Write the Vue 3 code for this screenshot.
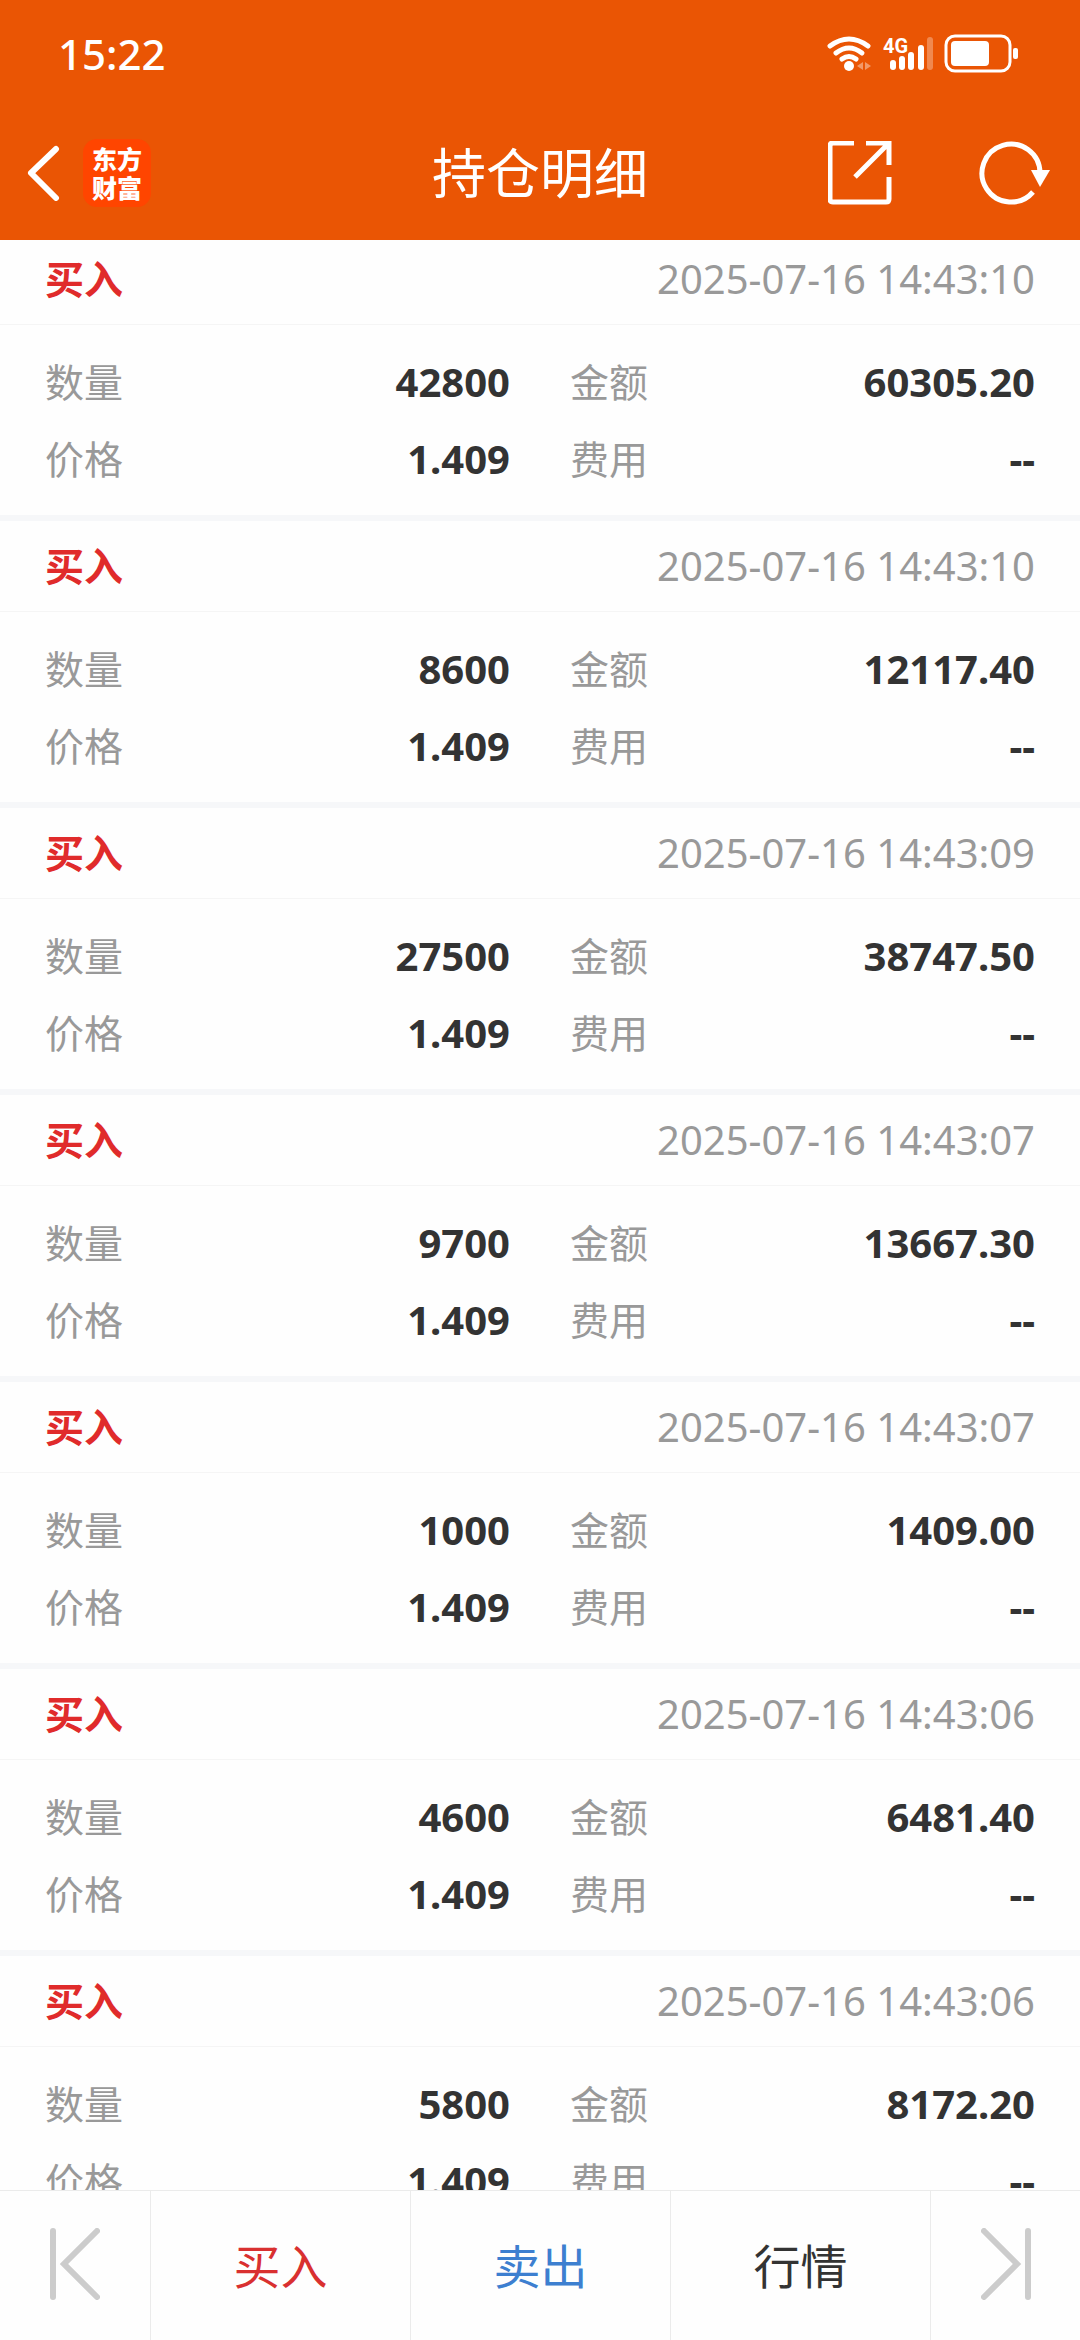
<template>
  <div class="page">
    <header class="header">
      <div class="status-bar">
        <span class="clock">15:22</span>
        <svg class="status-icons" width="196" height="44" viewBox="826 32 196 44" fill="none">
          <g stroke="#fff" stroke-width="5" stroke-linecap="round">
            <path d="M830 46 Q849 32 868 46" />
            <path d="M836 53 Q849 43 862 53" />
            <path d="M842 59 Q849 54 856 59" />
          </g>
          <circle cx="849" cy="66" r="5" fill="#fff" />
          <path d="M863 62 V70 L857 66 Z M865 62 V70 L871 66 Z" fill="#fff" fill-opacity="0.4" />
          <text class="network" x="883" y="53">4G</text>
          <g stroke="#fff" stroke-width="6" stroke-linecap="round">
            <path d="M893 63 V67" />
            <path d="M902 59 V67" />
            <path d="M911 55 V67" />
            <path d="M921 48 V67" />
            <path d="M930 40 V67" stroke-opacity="0.3" />
          </g>
          <rect x="946" y="36" width="64" height="35" rx="9" stroke="#fff" stroke-width="3" />
          <rect x="951" y="41" width="38" height="25" rx="4" fill="#fff" />
          <rect x="1013" y="48" width="5" height="11" rx="2" fill="#fff" />
        </svg>
      </div>

      <div class="nav-bar">
        <div class="nav-left">
          <button class="icon-button" type="button" aria-label="返回">
            <svg width="33" height="56" viewBox="27 144 33 56" fill="none">
              <path
                d="M56 148 L31 172 L56 197"
                stroke="#fff"
                stroke-width="6"
                stroke-linecap="round"
                stroke-linejoin="round"
              />
            </svg>
          </button>
          <div class="logo">东方<br />财富</div>
        </div>
        <h1 class="title">持仓明细</h1>
        <div class="nav-right">
          <button class="icon-button" type="button" aria-label="分享">
            <svg width="64" height="64" viewBox="828 141 64 64" fill="none" stroke="#fff">
              <path
                d="M854 143 H833 Q830 143 830 146 V199 Q830 202 833 202 H886 Q889 202 889 199 V177"
                stroke-width="5"
              />
              <path d="M866 143 H889 V165 M889 143 L855 177" stroke-width="5" />
            </svg>
          </button>
          <button class="icon-button" type="button" aria-label="刷新">
            <svg width="74" height="68" viewBox="979 138 74 68" fill="none">
              <path d="M1040 172 A29 29 0 1 0 1033 191" stroke="#fff" stroke-width="5" />
              <path d="M1031 169 H1050 L1040 186 Z" fill="#fff" />
            </svg>
          </button>
        </div>
      </div>
    </header>

    <main ref="list" class="list">
      <section class="record" v-for="(item, index) in records" :key="index">
        <div class="record-head">
          <h2 class="side">买入</h2>
          <time class="time">{{ item.time }}</time>
        </div>
        <dl class="record-body">
          <div class="field">
            <dt>数量</dt>
            <dd>{{ item.count }}</dd>
          </div>
          <div class="field">
            <dt>金额</dt>
            <dd>{{ item.amount }}</dd>
          </div>
          <div class="field">
            <dt>价格</dt>
            <dd>1.409</dd>
          </div>
          <div class="field">
            <dt>费用</dt>
            <dd>--</dd>
          </div>
        </dl>
      </section>
    </main>

    <nav class="tab-bar">
      <button class="tab" type="button" aria-label="上一个">
        <svg width="50" height="72" viewBox="0 0 50 72" fill="none" stroke="#ccc">
          <path d="M3 3 V69" stroke-width="6" stroke-linecap="round" />
          <path d="M47 3 L14 36 L47 69" stroke-width="6" stroke-linecap="round" />
        </svg>
      </button>
      <button class="tab buy" type="button">买入</button>
      <button class="tab sell" type="button">卖出</button>
      <button class="tab" type="button">行情</button>
      <button class="tab" type="button" aria-label="下一个">
        <svg width="50" height="72" viewBox="0 0 50 72" fill="none" stroke="#ccc">
          <path d="M47 3 V69" stroke-width="6" stroke-linecap="round" />
          <path d="M3 3 L36 36 L3 69" stroke-width="6" stroke-linecap="round" />
        </svg>
      </button>
    </nav>
  </div>
</template>

<script setup>
import { onMounted, ref } from 'vue';

const list = ref(null);

const records = [
  { time: '2025-07-16 14:43:10', count: '42800', amount: '60305.20' },
  { time: '2025-07-16 14:43:10', count: '8600', amount: '12117.40' },
  { time: '2025-07-16 14:43:09', count: '27500', amount: '38747.50' },
  { time: '2025-07-16 14:43:07', count: '9700', amount: '13667.30' },
  { time: '2025-07-16 14:43:07', count: '1000', amount: '1409.00' },
  { time: '2025-07-16 14:43:06', count: '4600', amount: '6481.40' },
  { time: '2025-07-16 14:43:06', count: '5800', amount: '8172.20' },
];

// start with the top edge of the first record under the header
onMounted(() => {
  list.value.scrollTop = 6;
});
</script>

<style>
body {
  margin: 0;
  background: #fefefe;
}
</style>

<style scoped>
.page {
  display: flex;
  flex-direction: column;
  height: 100vh;
  overflow: hidden;
  color: #333;
  font-family: 'Noto Sans', 'Noto Sans CJK SC', sans-serif;
}

button {
  padding: 0;
  border: none;
  background: none;
  color: inherit;
  font-family: inherit;
  cursor: pointer;
}

svg {
  display: block;
}

.header {
  flex-shrink: 0;
  background: #ea5504;
  color: #fff;
}

.status-bar {
  display: flex;
  align-items: center;
  justify-content: space-between;
  height: 108px;
  padding: 0 58px;
}

.clock {
  font-size: 42px;
  font-weight: 500;
  line-height: 56px;
}

.network {
  font-family: 'Roboto', sans-serif;
  font-size: 20px;
  font-weight: 700;
  fill: #fff;
}

.nav-bar {
  display: grid;
  grid-template-columns: 1fr auto 1fr;
  align-items: center;
  height: 130px;
  padding: 0 27px 2px;
}

.nav-left {
  display: flex;
  align-items: center;
  gap: 23px;
}

.nav-right {
  display: flex;
  align-items: center;
  justify-content: flex-end;
  gap: 87px;
}

.logo {
  display: flex;
  align-items: center;
  justify-content: center;
  width: 68px;
  height: 68px;
  border-radius: 14px;
  background: #ff4500;
  font-family: 'Noto Sans CJK SC', sans-serif;
  font-size: 25px;
  font-weight: 900;
  line-height: 29px;
}

.title {
  margin: 0;
  padding-bottom: 4px;
  font-family: 'Noto Sans CJK SC', sans-serif;
  font-size: 54px;
  font-weight: 400;
  line-height: 72px;
}

.list {
  flex: 1;
  min-height: 0;
  overflow-y: auto;
  scrollbar-width: none;
}

.record {
  border-bottom: 6px solid #f6f7f9;
}

.record-head {
  display: flex;
  align-items: baseline;
  justify-content: space-between;
  height: 90px;
  padding: 0 45px;
  border-bottom: 1px solid #f5f5f5;
}

.side {
  margin: 0;
  color: #e02b2b;
  font-family: 'Noto Sans CJK SC', sans-serif;
  font-size: 39px;
  font-weight: 700;
  line-height: 56px;
}

.time {
  color: #999;
  font-size: 40px;
  line-height: 90px;
}

.record-body {
  display: grid;
  grid-template-columns: 1fr 1fr;
  column-gap: 60px;
  margin: 0;
  padding: 18px 45px;
}

.field {
  display: flex;
  align-items: baseline;
  justify-content: space-between;
  height: 77px;
}

.field dt {
  color: #999;
  font-family: 'Noto Sans CJK SC', sans-serif;
  font-size: 39px;
  line-height: 56px;
}

.field dd {
  margin: 0;
  font-size: 40px;
  font-weight: 700;
  line-height: 77px;
}

.tab-bar {
  display: grid;
  flex-shrink: 0;
  grid-template-columns: 150px 1fr 1fr 1fr 150px;
  height: 149px;
  border-top: 1px solid #ebebeb;
}

.tab {
  display: flex;
  align-items: center;
  justify-content: center;
  padding-bottom: 4px;
  font-family: 'Noto Sans CJK SC', sans-serif;
  font-size: 47px;
  line-height: 64px;
}

.tab + .tab {
  border-left: 1px solid #ebebeb;
}

.buy {
  color: #d93030;
}

.sell {
  color: #3d7fd0;
}
</style>
